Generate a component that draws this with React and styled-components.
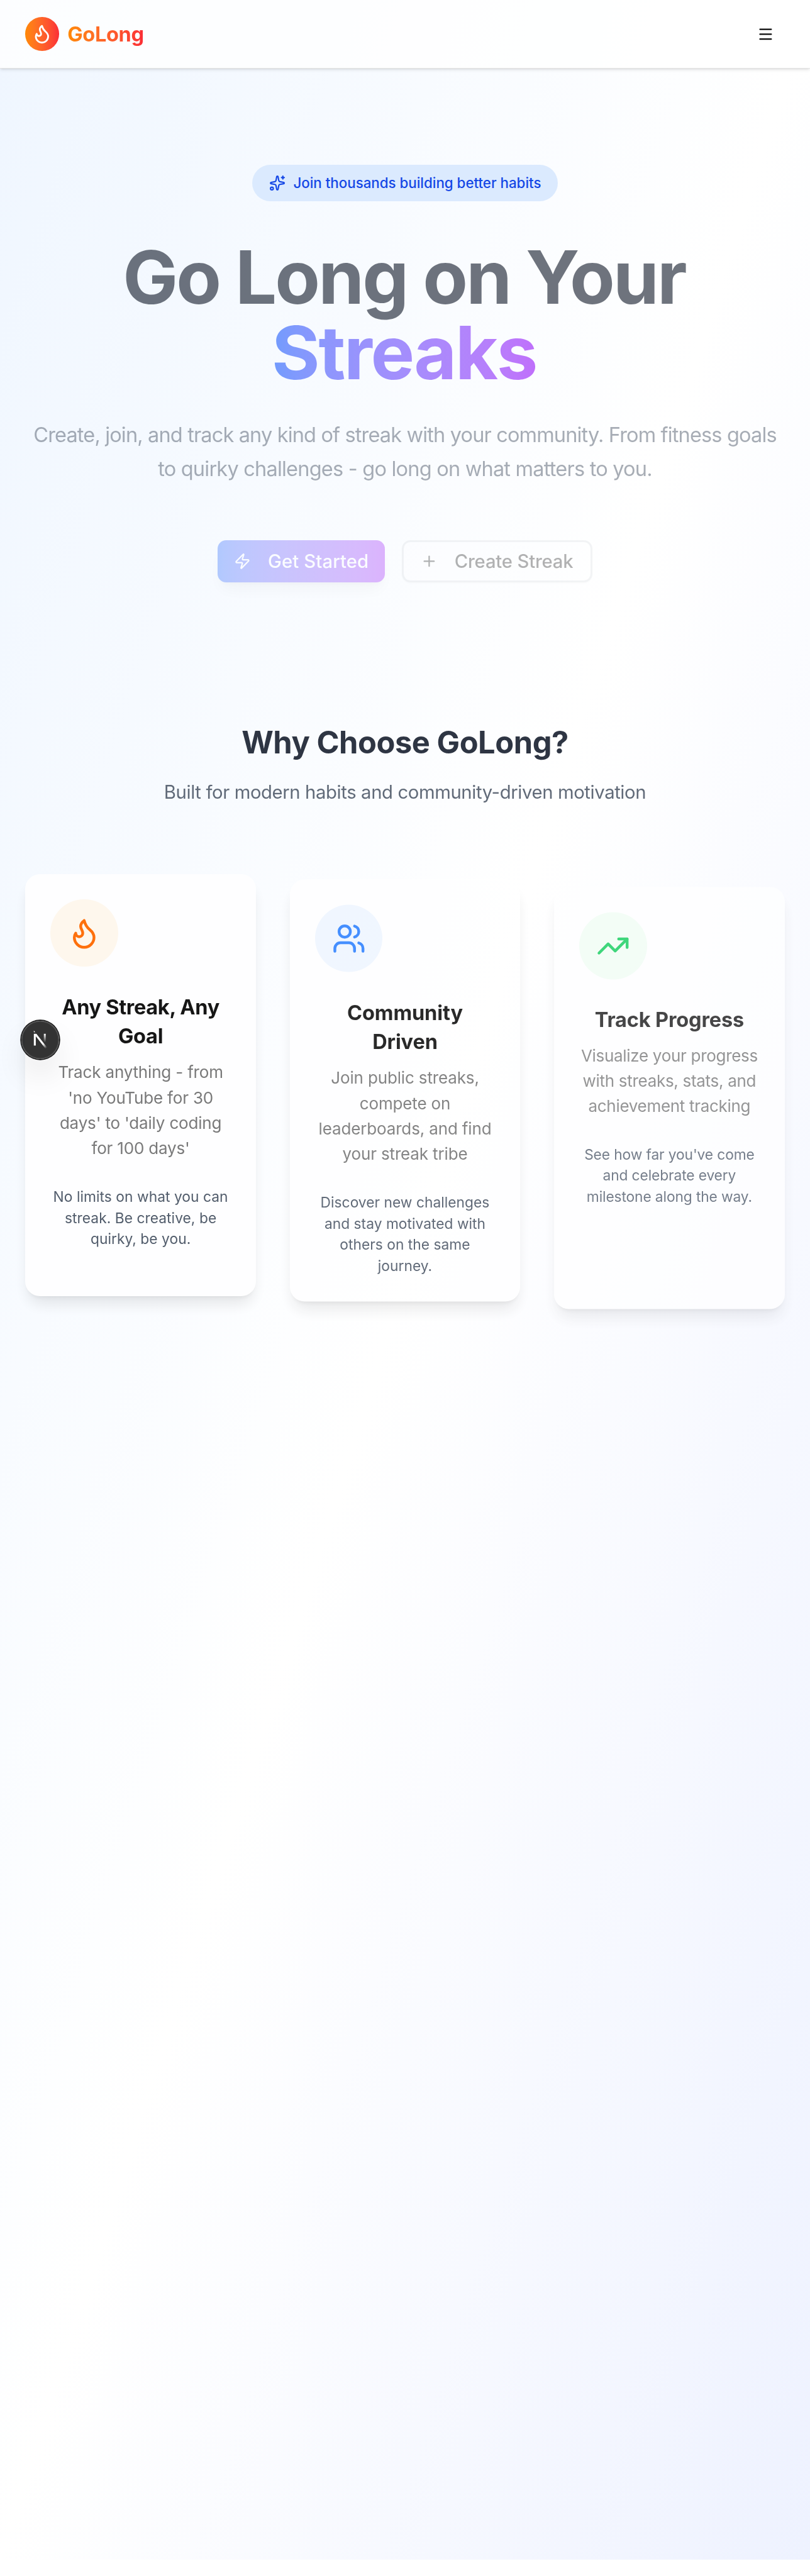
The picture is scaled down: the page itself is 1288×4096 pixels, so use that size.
import React from "react";
import styled, { createGlobalStyle } from "styled-components";
import { Flame, Menu, Plus, Sparkles, TrendingUp, Users, Zap } from "lucide-react";

const px = (n) => `${n / 16}rem`;

const GlobalStyle = createGlobalStyle`
  *, *::before, *::after { box-sizing: border-box; }
  html { font-size: 26.8333px; }
  body {
    margin: 0;
    background: #fff;
    color: #0a0a0a;
    font-family: Inter, "Liberation Sans", sans-serif;
    -webkit-font-smoothing: antialiased;
  }
  h1, h2, h3, p { margin: 0; }
  button { font: inherit; color: inherit; }
`;

const Page = styled.div`
  position: relative;
  height: ${px(2426.8)};
  background: linear-gradient(to bottom right in oklab, #eff6ff, #fff, #eef2ff);
`;

const Header = styled.header`
  display: flex;
  align-items: center;
  justify-content: space-between;
  height: ${px(65)};
  padding: 0 ${px(24)};
  background: rgba(255, 255, 255, 0.8);
  border-bottom: ${px(1)} solid #e5e5e5;
  box-shadow: 0 ${px(1)} ${px(3)} rgba(0, 0, 0, 0.1), 0 ${px(1)} ${px(2)} ${px(-1)} rgba(0, 0, 0, 0.1);
`;

const Brand = styled.div`
  display: flex;
  align-items: center;
  gap: ${px(8)};
`;

const BrandMark = styled.span`
  display: grid;
  place-items: center;
  width: ${px(32)};
  height: ${px(32)};
  border-radius: 50%;
  color: #fff;
  background: linear-gradient(to right in oklab, #ff8904, #fb2c36);
  svg { width: ${px(20)}; height: ${px(20)}; }
`;

const BrandName = styled.span`
  font-size: ${px(19.4)};
  font-weight: 700;
  line-height: ${px(28)};
  letter-spacing: -0.0104em;
  color: transparent;
  background: linear-gradient(to right in oklab, #ff8904, #fb2c36);
  background-clip: text;
`;

const MenuButton = styled.button`
  display: grid;
  place-items: center;
  width: ${px(36)};
  height: ${px(36)};
  padding: 0;
  border: 0;
  background: none;
  svg { width: ${px(16)}; height: ${px(16)}; }
`;

const Hero = styled.section`
  display: flex;
  flex-direction: column;
  align-items: center;
  padding: ${px(91)} ${px(24)} 0;
  text-align: center;
`;

const Pill = styled.div`
  display: flex;
  align-items: center;
  gap: ${px(7.6)};
  height: ${px(34.7)};
  padding: 0 ${px(15.6)};
  border-radius: ${px(18)};
  background: #dbeafe;
  color: #1447e6;
  font-size: ${px(13.31)};
  font-weight: 500;
  letter-spacing: 0;
  white-space: nowrap;
  svg { width: ${px(15.6)}; height: ${px(15.6)}; }
`;

const HeroTitle = styled.h1`
  margin-top: ${px(36.3)};
  padding-right: ${px(1.8)};
  font-size: ${px(69.84)};
  line-height: ${px(72)};
  font-weight: 700;
  letter-spacing: -0.0246em;
  white-space: nowrap;
  color: #101828;
  opacity: 0.6;
`;

const Highlight = styled.span`
  letter-spacing: -0.0194em;
  color: transparent;
  background: linear-gradient(to right in oklab, #155dfc, #9810fa);
  background-clip: text;
`;

const HeroText = styled.p`
  margin-top: ${px(25.6)};
  font-size: ${px(19.4)};
  line-height: ${px(32.1)};
  letter-spacing: -0.0263em;
  white-space: nowrap;
  color: #4a5565;
  opacity: 0.48;
`;

const HeroTextEnd = styled.span`
  letter-spacing: -0.0243em;
`;

const Actions = styled.div`
  display: flex;
  gap: ${px(16)};
  margin-top: ${px(51.6)};
  opacity: 0.31;
`;

const ActionButton = styled.button`
  display: flex;
  align-items: center;
  gap: ${px(16)};
  width: ${(p) => px(p.$outline ? 180.8 : 159.1)};
  height: ${px(40)};
  padding: 0 0 0 ${px(16)};
  border-radius: ${px(8)};
  border: ${(p) => (p.$outline ? `${px(2)} solid #d9dce1` : "0")};
  background: ${(p) => (p.$outline ? "#fff" : "linear-gradient(to right in oklab, #155dfc, #9810fa)")};
  color: ${(p) => (p.$outline ? "#0a0a0a" : "#fff")};
  box-shadow: ${(p) =>
    p.$outline
      ? `0 ${px(1)} ${px(2)} rgba(0, 0, 0, 0.05)`
      : `0 ${px(10)} ${px(15)} ${px(-3)} rgba(0, 0, 0, 0.1), 0 ${px(4)} ${px(6)} ${px(-4)} rgba(0, 0, 0, 0.1)`};
  font-size: ${px(17.46)};
  font-weight: 500;
  letter-spacing: ${(p) => (p.$outline ? "-0.006em" : "0.0031em")};
  white-space: nowrap;
  svg { width: ${px(16)}; height: ${px(16)}; flex: none; }
`;

const Features = styled.section`
  padding: ${px(133.9)} ${px(24)} 0;
`;

const FeaturesIntro = styled.div`
  text-align: center;
  opacity: 0.87;
`;

const SectionTitle = styled.h2`
  font-size: ${px(29.1)};
  line-height: ${px(36)};
  font-weight: 700;
  letter-spacing: -0.0094em;
  color: #101828;
`;

const SectionText = styled.p`
  margin-top: ${px(15.5)};
  font-size: ${px(17.46)};
  line-height: ${px(28)};
  letter-spacing: -0.0132em;
  color: #4a5565;
`;

const CardGrid = styled.div`
  display: grid;
  grid-template-columns: repeat(3, 1fr);
  gap: ${px(32)};
  margin-top: ${px(62.9)};
`;

const Card = styled.article`
  height: ${px(400)};
  padding: ${px(24)} 0;
  border-radius: ${px(14)};
  background: #fff;
  box-shadow: 0 ${px(10)} ${px(15)} ${px(-3)} rgba(0, 0, 0, 0.1), 0 ${px(4)} ${px(6)} ${px(-4)} rgba(0, 0, 0, 0.1);
  text-align: center;
  white-space: nowrap;
  opacity: ${(p) => p.$opacity};
  transform: translateY(${(p) => px(p.$drop)});
`;

const CardIcon = styled.div`
  display: grid;
  place-items: center;
  width: ${px(64)};
  height: ${px(64)};
  margin-left: ${px(24)};
  border-radius: 50%;
  background: ${(p) => p.$tint};
  color: ${(p) => p.$color};
  svg { width: ${px(32)}; height: ${px(32)}; }
`;

const CardTitle = styled.h3`
  margin-top: ${px(24)};
  font-size: ${px(19.4)};
  line-height: ${px(28)};
  font-weight: 650;
  letter-spacing: ${(p) => p.$tracking};
`;

const CardText = styled.p`
  margin-top: ${px(8.4)};
  font-size: ${px(15.52)};
  line-height: ${px(24)};
  letter-spacing: ${(p) => p.$tracking};
  color: #737373;
`;

const CardNote = styled.p`
  margin-top: ${px(23.6)};
  font-size: ${px(13.58)};
  line-height: ${px(20)};
  letter-spacing: ${(p) => p.$tracking};
  color: #4a5565;
`;

const DevBadge = styled.div`
  position: absolute;
  left: ${px(20)};
  top: ${px(968)};
  width: ${px(36)};
  height: ${px(36)};
  border-radius: 50%;
  background: rgba(0, 0, 0, 0.8);
  box-shadow: 0 0 0 ${px(1)} #171717, inset 0 0 0 ${px(1)} rgba(255, 255, 255, 0.14),
    0 ${px(16)} ${px(32)} ${px(-8)} rgba(0, 0, 0, 0.24);
  svg { display: block; width: 100%; height: 100%; }
`;

const CARDS = [
  {
    icon: Flame, tint: "#fff7ed", color: "#ff6900", opacity: 0.95, drop: 0,
    title: ["Any Streak, Any", "Goal"],
    text: ["Track anything - from", "'no YouTube for 30", "days' to 'daily coding", "for 100 days'"],
    note: ["No limits on what you can", "streak. Be creative, be", "quirky, be you."],
    tracking: ["-0.0095em", "-0.007em", "0.002em"],
  },
  {
    icon: Users, tint: "#eff6ff", color: "#2b7fff", opacity: 0.87, drop: 5.1,
    title: ["Community", "Driven"],
    text: ["Join public streaks,", "compete on", "leaderboards, and find", "your streak tribe"],
    note: ["Discover new challenges", "and stay motivated with", "others on the same", "journey."],
    tracking: ["-0.003em", "-0.006em", "0.0008em"],
  },
  {
    icon: TrendingUp, tint: "#f0fdf4", color: "#00c950", opacity: 0.75, drop: 12.2,
    title: ["Track Progress"],
    text: ["Visualize your progress", "with streaks, stats, and", "achievement tracking"],
    note: ["See how far you've come", "and celebrate every", "milestone along the way."],
    tracking: ["-0.005em", "-0.0118em", "-0.0053em"],
  },
];

const Lines = ({ items }) =>
  items.map((line, i) => (
    <React.Fragment key={line}>
      {i > 0 && <br />}
      {line}
    </React.Fragment>
  ));

const NextLogo = () => (
  <svg viewBox="0 0 36 36" fill="none">
    <defs>
      <linearGradient id="diag" gradientUnits="userSpaceOnUse" x1="9.956" y1="11.123" x2="15.478" y2="17.967">
        <stop stopColor="#fff" />
        <stop offset="0.604" stopColor="#fff" stopOpacity="0" />
        <stop offset="1" stopColor="#fff" stopOpacity="0" />
      </linearGradient>
      <linearGradient id="stem" gradientUnits="userSpaceOnUse" x1="11.822" y1="1.4" x2="11.792" y2="9.625">
        <stop stopColor="#fff" />
        <stop offset="1" stopColor="#fff" stopOpacity="0" />
      </linearGradient>
      <mask id="cut" maskUnits="userSpaceOnUse" x="-5" y="-5" width="30" height="30">
        <rect x="-5" y="-5" width="30" height="30" fill="#fff" />
        <rect width="5" height="1.5" fill="#000" />
      </mask>
    </defs>
    <g transform="translate(10.4 10.9)" strokeWidth="1.86">
      <path d="M13.3 15.2 L2.34 1 V12.6" stroke="url(#diag)" mask="url(#cut)" />
      <path d="M11.825 1.5 V13.1" stroke="url(#stem)" />
    </g>
  </svg>
);

export default function App() {
  return (
    <>
      <GlobalStyle />
      <Page>
        <Header>
          <Brand>
            <BrandMark><Flame /></BrandMark>
            <BrandName>GoLong</BrandName>
          </Brand>
          <MenuButton aria-label="Menu"><Menu /></MenuButton>
        </Header>

        <Hero>
          <Pill><Sparkles />Join thousands building better habits</Pill>
          <HeroTitle>
            Go Long on Your
            <br />
            <Highlight>Streaks</Highlight>
          </HeroTitle>
          <HeroText>
            Create, join, and track any kind of streak with your community. From fitness goals
            <br />
            <HeroTextEnd>to quirky challenges - go long on what matters to you.</HeroTextEnd>
          </HeroText>
          <Actions>
            <ActionButton><Zap />Get Started</ActionButton>
            <ActionButton $outline><Plus />Create Streak</ActionButton>
          </Actions>
        </Hero>

        <Features>
          <FeaturesIntro>
            <SectionTitle>Why Choose GoLong?</SectionTitle>
            <SectionText>Built for modern habits and community-driven motivation</SectionText>
          </FeaturesIntro>
          <CardGrid>
            {CARDS.map(({ icon: Icon, ...card }) => (
              <Card key={card.title[0]} $opacity={card.opacity} $drop={card.drop}>
                <CardIcon $tint={card.tint} $color={card.color}><Icon /></CardIcon>
                <CardTitle $tracking={card.tracking[0]}><Lines items={card.title} /></CardTitle>
                <CardText $tracking={card.tracking[1]}><Lines items={card.text} /></CardText>
                <CardNote $tracking={card.tracking[2]}><Lines items={card.note} /></CardNote>
              </Card>
            ))}
          </CardGrid>
        </Features>

        <DevBadge><NextLogo /></DevBadge>
      </Page>
    </>
  );
}
